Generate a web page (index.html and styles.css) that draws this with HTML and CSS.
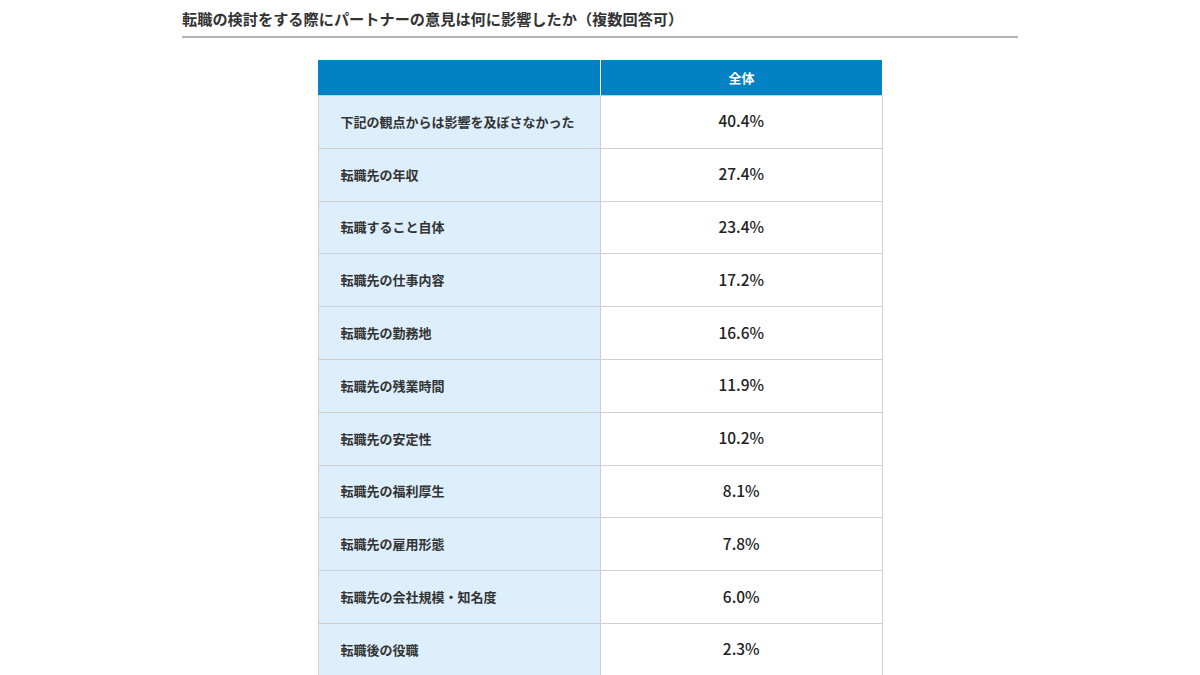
FILE: index.html
```html
<!DOCTYPE html>
<html lang="ja">
<head>
<meta charset="utf-8">
<link rel="stylesheet" href="styles.css">
</head>
<body>
<div class="page">
  <h2 class="title">転職の検討をする際にパートナーの意見は何に影響したか（複数回答可）</h2>
  <table class="data">
    <thead>
      <tr><th class="blank"></th><th>全体</th></tr>
    </thead>
    <tbody>
      <tr><td class="label">下記の観点からは影響を及ぼさなかった</td><td class="val">40.4%</td></tr>
      <tr><td class="label">転職先の年収</td><td class="val">27.4%</td></tr>
      <tr><td class="label">転職すること自体</td><td class="val">23.4%</td></tr>
      <tr><td class="label">転職先の仕事内容</td><td class="val">17.2%</td></tr>
      <tr><td class="label">転職先の勤務地</td><td class="val">16.6%</td></tr>
      <tr><td class="label">転職先の残業時間</td><td class="val">11.9%</td></tr>
      <tr><td class="label">転職先の安定性</td><td class="val">10.2%</td></tr>
      <tr><td class="label">転職先の福利厚生</td><td class="val">8.1%</td></tr>
      <tr><td class="label">転職先の雇用形態</td><td class="val">7.8%</td></tr>
      <tr><td class="label">転職先の会社規模・知名度</td><td class="val">6.0%</td></tr>
      <tr><td class="label">転職後の役職</td><td class="val">2.3%</td></tr>
    </tbody>
  </table>
</div>
</body>
</html>
```
FILE: styles.css
```css
html, body {
  margin: 0;
  padding: 0;
  background: #fff;
}
body {
  font-family: "Noto Sans CJK JP", "Noto Sans", sans-serif;
  color: #333;
  overflow: hidden;
}
.page {
  width: 836px;
  margin: 0 auto;
  padding-top: 7px;
}
.title {
  margin: 0;
  font-size: 15.2px;
  font-weight: 700;
  line-height: 22px;
  padding-bottom: 7px;
  border-bottom: 2px solid #b3b3b3;
  color: #333;
}
.data {
  margin: 22px auto 0;
  width: 565px;
  border-collapse: collapse;
  table-layout: fixed;
}
.data th {
  background: #0281c4;
  color: #fff;
  font-size: 13px;
  font-weight: 700;
  height: 35px;
  padding: 0;
  border-right: 1px solid #fff;
  text-align: center;
}
.data th:last-child {
  border-right: none;
}
.data th.blank {
  width: 282px;
}
.data td {
  border: 1px solid #cfcfcf;
  height: 48.8px;
  padding: 0;
}
.data td.label {
  background: #ddeefc;
  font-size: 13px;
  font-weight: 700;
  padding: 1px 0 2px 22px;
  color: #333;
}
.data td.val {
  text-align: center;
  font-size: 15.5px;
  font-weight: 500;
  color: #222;
  background: #fff;
  padding: 0 0 3px 0;
}
```
